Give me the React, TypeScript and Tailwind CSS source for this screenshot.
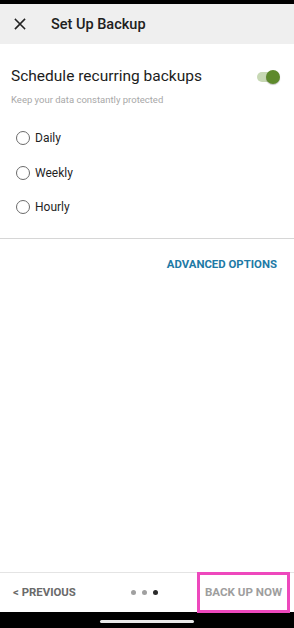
import React from "react";

function Radio({ label }: { label: string }) {
  return (
    <div className="flex items-center h-[20px]">
      <div className="ml-[16px] w-[14px] h-[14px] rounded-full border-[1.5px] border-[#6b6b6b] bg-white" />
      <span className="ml-[5px] text-[12px] text-[#1f1f1f] leading-none">{label}</span>
    </div>
  );
}

export default function App() {
  return (
    <div
      className="w-[294px] h-[628px] flex flex-col bg-white overflow-hidden"
      style={{ fontFamily: "Roboto, 'Noto Sans', sans-serif" }}
    >
      <div className="h-[4px] bg-black shrink-0" />
      <div className="h-[40px] bg-[#efefef] flex items-center shrink-0">
        <svg className="ml-[14px]" width="12" height="12" viewBox="0 0 12 12">
          <path d="M1.5 1.5 L10.5 10.5 M10.5 1.5 L1.5 10.5" stroke="#222" strokeWidth="1.6" strokeLinecap="square" />
        </svg>
        <span className="ml-[25px] pt-[2px] text-[14.5px] text-[#202020] font-medium">Set Up Backup</span>
      </div>
      <div className="flex items-center justify-between mt-[23px] h-[20px]">
        <span className="ml-[11px] text-[15.5px] text-[#1c1c1c] leading-none">Schedule recurring backups</span>
        <div className="relative mr-[14px] w-[23px] h-[14px] flex items-center">
          <div className="w-[21px] h-[10px] rounded-full bg-[#c7d8b4]" />
          <div className="absolute right-0 top-0 w-[14px] h-[14px] rounded-full bg-[#5e8a2c] shadow-[0_1px_1px_rgba(0,0,0,0.25)]" />
        </div>
      </div>
      <div className="ml-[11px] mt-[8px] text-[9.5px] text-[#a8a8a8] leading-[10px]">Keep your data constantly protected</div>
      <div className="mt-[23px] flex flex-col gap-[14.5px]">
        <Radio label="Daily" />
        <Radio label="Weekly" />
        <Radio label="Hourly" />
      </div>
      <div className="mt-[21px] h-px bg-[#d6d6d6]" />
      <div className="flex justify-end mt-[18px]">
        <span className="mr-[17px] text-[11.4px] font-bold text-[#1e7aa6] leading-[14px]">ADVANCED OPTIONS</span>
      </div>
      <div className="flex-1" />
      <div className="h-px bg-[#e4e4e4] shrink-0" />
      <div className="h-[39px] flex items-center shrink-0 relative">
        <span className="ml-[13px] text-[11.4px] font-bold text-[#6a6a6a] leading-none">&lt; PREVIOUS</span>
        <div className="absolute left-[131px] top-[17px] flex gap-[6px]">
          <div className="w-[5px] h-[5px] rounded-full bg-[#a0a0a0]" />
          <div className="w-[5px] h-[5px] rounded-full bg-[#a0a0a0]" />
          <div className="w-[5px] h-[5px] rounded-full bg-[#2a2a2a]" />
        </div>
        <div className="absolute left-[197px] top-[-1px] w-[93px] h-[41px] border-[3px] border-[#ee48bd] flex items-center justify-center">
          <span className="text-[11.6px] font-bold text-[#9e9e9e] leading-none">BACK UP NOW</span>
        </div>
      </div>
      <div className="h-[16px] bg-black shrink-0 flex justify-center pt-[8px]">
        <div className="w-[94px] h-[3px] rounded-full bg-[#e8e8e8]" />
      </div>
    </div>
  );
}
